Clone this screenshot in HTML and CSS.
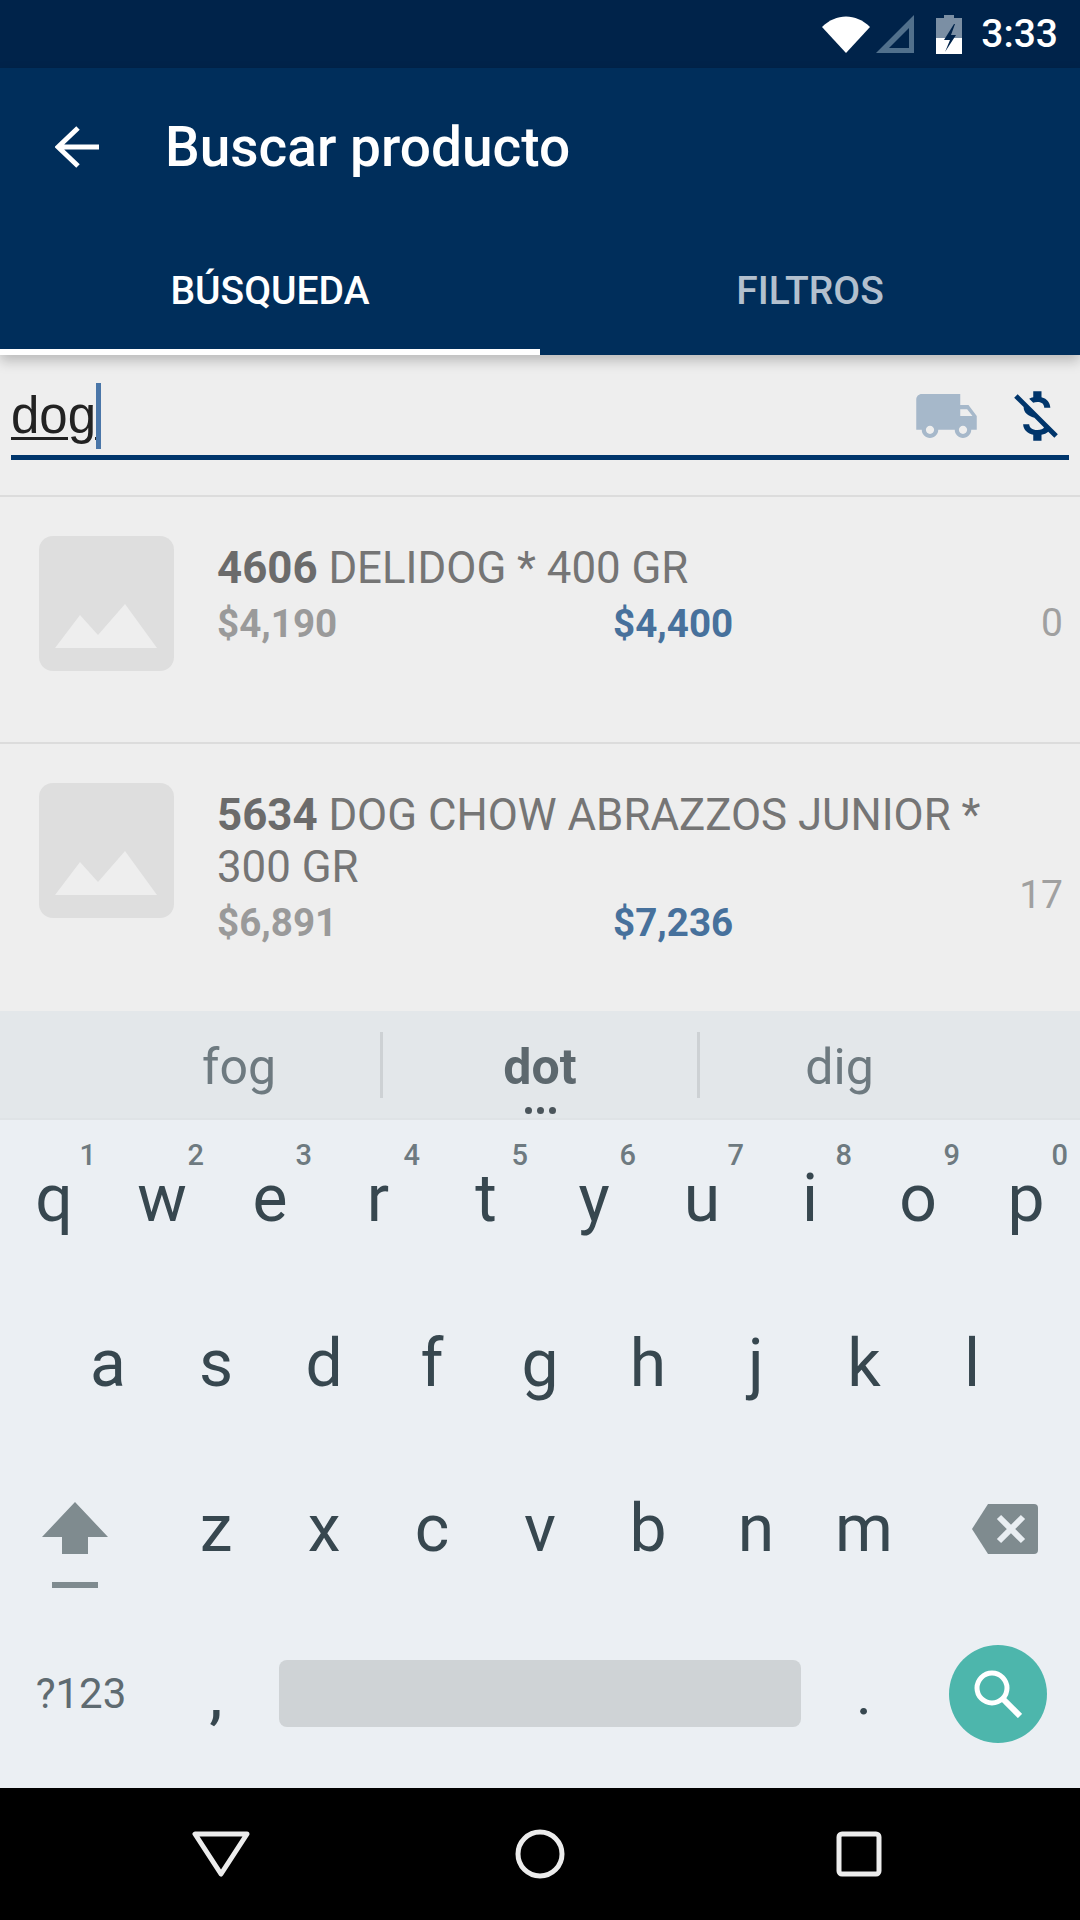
FILE: index.html
```html
<!DOCTYPE html>
<html lang="es">
<head>
    <meta charset="UTF-8">
    <title>Buscar producto</title>
    <link rel="stylesheet" href="styles.css">
</head>
<body>
    <div class="status-bar">
        <svg class="ic-wifi" viewBox="0 0 48 37"><path d="M0 11C14-3 34-3 48 11L24 37z" fill="#fff"/></svg>
        <svg class="ic-signal" viewBox="0 0 38 38"><path d="M38 0V38H0z M33 13 13 33H33z" fill="#51708c" fill-rule="evenodd"/></svg>
        <svg class="ic-battery" viewBox="0 0 26 39">
            <path d="M8 0H18V3H26V23H0V3H8z" fill="#7b8fa4"/>
            <path d="M0 23H26V39H0z" fill="#fff"/>
            <path d="M18 9 8 25H14L9 37 20 20H15L19 9z" fill="#00234a"/>
        </svg>
        <span class="clock">3:33</span>
    </div>

    <div class="app-bar">
        <div class="toolbar">
            <svg class="ic-back" viewBox="0 0 44 44"><path d="M44 22H4M23 3 3 22l20 19" fill="none" stroke="#fff" stroke-width="5"/></svg>
            <h1>Buscar producto</h1>
        </div>
        <div class="tabs">
            <div class="tab active">BÚSQUEDA</div>
            <div class="tab">FILTROS</div>
        </div>
    </div>

    <div class="search-section">
        <div class="search-field">
            <span class="search-text"><u>dog</u><i class="caret"></i></span>
            <svg class="ic-truck" viewBox="1 4 22 16"><path fill="#a6b8ca" d="M20 8h-3V4H3c-1.1 0-2 .9-2 2v11h2c0 1.66 1.34 3 3 3s3-1.34 3-3h6c0 1.66 1.34 3 3 3s3-1.34 3-3h2v-5l-3-4zM6 18.5c-.83 0-1.5-.67-1.5-1.5s.67-1.5 1.5-1.5 1.5.67 1.5 1.5-.67 1.5-1.5 1.5zm13.5-9l1.96 2.5H17V9.5h2.5zm-1.5 9c-.83 0-1.5-.67-1.5-1.5s.67-1.5 1.5-1.5 1.5.67 1.5 1.5-.67 1.5-1.5 1.5z"/></svg>
            <svg class="ic-money" viewBox="4 3 16 18"><path fill="#00356b" d="M12.5 6.9c1.78 0 2.44.85 2.5 2.1h2.21c-.07-1.72-1.12-3.3-3.21-3.81V3h-3v2.16c-.53.12-1.03.3-1.48.54l1.47 1.47c.41-.17.91-.27 1.51-.27zM5.33 4.06L4.06 5.33 7.5 8.77c0 2.08 1.56 3.22 3.91 3.91l3.51 3.51c-.34.48-1.05.91-2.42.91-2.06 0-2.87-.92-2.98-2.1h-2.2c.12 2.19 1.76 3.42 3.68 3.83V21h3v-2.15c.96-.18 1.83-.55 2.45-1.12l2.22 2.22 1.27-1.27L5.33 4.06z"/></svg>
        </div>
    </div>

    <div class="product-list">
        <div class="product first">
            <div class="thumb">
                <svg viewBox="0 0 135 135"><path d="M16 112 41 79 59 99 86 68 118 112z" fill="#eeeeee"/></svg>
            </div>
            <div class="product-info">
                <div class="product-name"><b>4606</b> DELIDOG * 400 GR</div>
                <div class="prices">
                    <span class="price-cost">$4,190</span>
                    <span class="price-sale">$4,400</span>
                </div>
            </div>
            <div class="stock top">0</div>
        </div>
        <div class="product second">
            <div class="thumb">
                <svg viewBox="0 0 135 135"><path d="M16 112 41 79 59 99 86 68 118 112z" fill="#eeeeee"/></svg>
            </div>
            <div class="product-info">
                <div class="product-name"><b>5634</b> DOG CHOW ABRAZZOS JUNIOR * 300 GR</div>
                <div class="prices">
                    <span class="price-cost">$6,891</span>
                    <span class="price-sale">$7,236</span>
                </div>
            </div>
            <div class="stock">17</div>
        </div>
    </div>

    <div class="suggestions">
        <div class="suggestion">fog</div>
        <div class="suggestion main">dot<span class="more"><i></i><i></i><i></i></span></div>
        <div class="suggestion">dig</div>
    </div>

    <div class="keyboard">
        <div class="key-row">
            <div class="key"><sup>1</sup>q</div>
            <div class="key"><sup>2</sup>w</div>
            <div class="key"><sup>3</sup>e</div>
            <div class="key"><sup>4</sup>r</div>
            <div class="key"><sup>5</sup>t</div>
            <div class="key"><sup>6</sup>y</div>
            <div class="key"><sup>7</sup>u</div>
            <div class="key"><sup>8</sup>i</div>
            <div class="key"><sup>9</sup>o</div>
            <div class="key"><sup>0</sup>p</div>
        </div>
        <div class="key-row inset">
            <div class="key">a</div>
            <div class="key">s</div>
            <div class="key">d</div>
            <div class="key">f</div>
            <div class="key">g</div>
            <div class="key">h</div>
            <div class="key">j</div>
            <div class="key">k</div>
            <div class="key">l</div>
        </div>
        <div class="key-row third">
            <div class="key shift">
                <svg viewBox="0 0 66 86"><path d="M33 0 66 35H46V52H20V35H0z" fill="#7f8b8f"/><path d="M10 80H56V86H10z" fill="#7f8b8f"/></svg>
            </div>
            <div class="key">z</div>
            <div class="key">x</div>
            <div class="key">c</div>
            <div class="key">v</div>
            <div class="key">b</div>
            <div class="key">n</div>
            <div class="key">m</div>
            <div class="key backspace">
                <svg viewBox="0 0 66 50"><path d="M16 0H62a4 4 0 0 1 4 4V46a4 4 0 0 1-4 4H16L0 25z" fill="#7f8b8f"/><path d="M27 13 51 37M51 13 27 37" stroke="#e9eef2" stroke-width="6"/></svg>
            </div>
        </div>
        <div class="key-row bottom">
            <div class="key symbols">?123</div>
            <div class="key comma">,</div>
            <div class="space-bar"></div>
            <div class="key period">.</div>
            <div class="search-key">
                <svg viewBox="0 0 48 48"><circle cx="18" cy="18" r="15" fill="none" stroke="#fff" stroke-width="5"/><path d="M28 28 46 46" stroke="#fff" stroke-width="6"/></svg>
            </div>
        </div>
    </div>

    <div class="nav-bar">
        <svg viewBox="0 0 58 46"><path d="M3 3H55L29 43z" fill="none" stroke="#ececec" stroke-width="5" stroke-linejoin="round"/></svg>
        <svg viewBox="0 0 50 50" class="nav-home"><circle cx="25" cy="25" r="22" fill="none" stroke="#ececec" stroke-width="5"/></svg>
        <svg viewBox="0 0 46 46" class="nav-recent"><rect x="3" y="3" width="40" height="40" rx="3" fill="none" stroke="#ececec" stroke-width="5"/></svg>
    </div>
</body>
</html>
```

FILE: styles.css
```css
* {
    margin: 0;
    padding: 0;
    box-sizing: border-box;
}

body {
    width: 1080px;
    height: 1920px;
    overflow: hidden;
    font-family: Roboto, sans-serif;
    background: #eeeeee;
}

svg {
    display: block;
}

.status-bar {
    height: 68px;
    background: #00234a;
    display: flex;
    align-items: center;
    padding-right: 22px;
    justify-content: flex-end;
}

.ic-wifi {
    width: 48px;
    height: 37px;
    margin-right: 6px;
}

.ic-signal {
    width: 38px;
    height: 38px;
    margin-right: 22px;
}

.ic-battery {
    width: 26px;
    height: 39px;
    margin-right: 19px;
}

.clock {
    color: #fff;
    font-size: 39px;
    font-weight: 500;
}

.app-bar {
    height: 287px;
    background: #002e5b;
    box-shadow: 0 6px 12px rgba(0, 0, 0, 0.22);
    position: relative;
    color: #fff;
}

.toolbar {
    height: 158px;
    display: flex;
    align-items: center;
    padding-left: 55px;
}

.ic-back {
    width: 44px;
    height: 44px;
    margin-right: 66px;
}

.toolbar h1 {
    font-size: 55px;
    font-weight: 500;
}

.tabs {
    display: flex;
    height: 129px;
}

.tab {
    width: 540px;
    padding-top: 42px;
    text-align: center;
    font-size: 39px;
    font-weight: 500;
    color: #b3c0ce;
}

.tab.active {
    color: #fff;
    border-bottom: 6px solid #fff;
}

.search-section {
    height: 142px;
    padding: 21px 11px 0;
    border-bottom: 2px solid #dcdcdc;
}

.search-field {
    height: 84px;
    border-bottom: 5px solid #00356b;
    display: flex;
    align-items: center;
}

.search-text {
    font-family: "Liberation Sans", sans-serif;
    font-size: 51px;
    color: #222;
    flex: 1;
    display: flex;
    align-items: center;
}

.search-text u {
    text-decoration-thickness: 3px;
    text-underline-offset: 4px;
}

.caret {
    width: 5px;
    height: 66px;
    background: #4a76a8;
}

.ic-truck {
    width: 61px;
    height: 44px;
    margin-right: 37px;
}

.ic-money {
    width: 44px;
    height: 50px;
    margin-right: 11px;
}

.product {
    display: flex;
    padding-left: 39px;
    padding-right: 17px;
    border-bottom: 2px solid #dcdcdc;
}

.product.first {
    height: 247px;
}

.product.second {
    height: 267px;
    border-bottom: none;
}

.thumb {
    width: 135px;
    height: 135px;
    margin-top: 39px;
    margin-right: 43px;
    background: #dedede;
    border-radius: 14px;
    flex-shrink: 0;
}

.product-info {
    flex: 1;
    padding-top: 45px;
}

.product-name {
    font-size: 43.8px;
    line-height: 52px;
    color: #757575;
    width: 790px;
}

.product-name b {
    color: #6b6b6b;
}

.prices {
    display: flex;
    font-size: 38.6px;
    font-weight: 700;
    line-height: 54px;
    margin-top: 3px;
}

.price-cost {
    width: 396px;
    color: #9a9a9a;
}

.price-sale {
    color: #47719c;
}

.stock {
    align-self: center;
    font-size: 39px;
    color: #a0a0a0;
    margin-top: 34px;
}

.stock.top {
    align-self: flex-start;
    margin-top: 103px;
}

.suggestions {
    height: 107px;
    background: #e3e7ea;
    display: flex;
    align-items: center;
    padding-left: 120px;
}

.suggestion {
    position: relative;
    height: 66px;
    width: 279px;
    text-align: center;
    font-size: 50px;
    line-height: 70px;
    color: #6e7a80;
}

.suggestion:first-child {
    width: 260px;
    padding-right: 22px;
}

.suggestion.main {
    width: 320px;
    border-left: 3px solid #cdd1d4;
    border-right: 3px solid #cdd1d4;
    font-weight: 700;
    color: #5d686e;
}

.more {
    position: absolute;
    left: 0;
    right: 0;
    bottom: -16px;
    display: flex;
    justify-content: center;
    gap: 5px;
}

.more i {
    width: 7px;
    height: 7px;
    border-radius: 50%;
    background: #4b555b;
}

.keyboard {
    height: 670px;
    background: #ebeff3;
    border-top: 2px solid #dfe3e6;
}

.key-row {
    display: flex;
    height: 165px;
}

.key-row.inset {
    padding: 0 54px;
}

.key-row.bottom {
    height: 157px;
    align-items: center;
}

.key {
    position: relative;
    width: 108px;
    display: flex;
    align-items: center;
    justify-content: center;
    padding-bottom: 8px;
    font-size: 66px;
    color: #37474f;
}

.key sup {
    position: absolute;
    top: 18px;
    right: 12px;
    font-size: 29px;
    font-weight: 500;
    color: #6e7a80;
}

.shift {
    width: 162px;
    padding-right: 12px;
}

.shift svg {
    width: 66px;
    height: 86px;
    margin-top: 32px;
}

.backspace {
    width: 162px;
    padding-left: 12px;
}

.backspace svg {
    width: 66px;
    height: 50px;
}

.bottom .key {
    padding-bottom: 0;
}

.bottom .symbols {
    width: 162px;
    font-size: 42px;
    color: #5f6b71;
}

.bottom .comma {
    width: 108px;
    font-size: 60px;
    font-weight: 500;
    padding-top: 6px;
}

.space-bar {
    width: 522px;
    height: 67px;
    margin-left: 9px;
    margin-right: 9px;
    background: #cfd3d6;
    border-radius: 8px;
}

.bottom .period {
    width: 108px;
    font-size: 60px;
}

.search-key {
    width: 98px;
    height: 98px;
    margin-left: 31px;
    border-radius: 50%;
    background: #4db6ac;
    display: flex;
    align-items: center;
    justify-content: center;
}

.search-key svg {
    width: 48px;
    height: 48px;
}

.nav-bar {
    height: 132px;
    background: #000;
    display: flex;
    align-items: center;
    justify-content: space-between;
    padding: 0 198px 0 192px;
}

.nav-bar svg {
    width: 58px;
    height: 46px;
}

.nav-bar .nav-home {
    width: 50px;
    height: 50px;
    margin-left: -6px;
}

.nav-bar .nav-recent {
    width: 46px;
}
```
